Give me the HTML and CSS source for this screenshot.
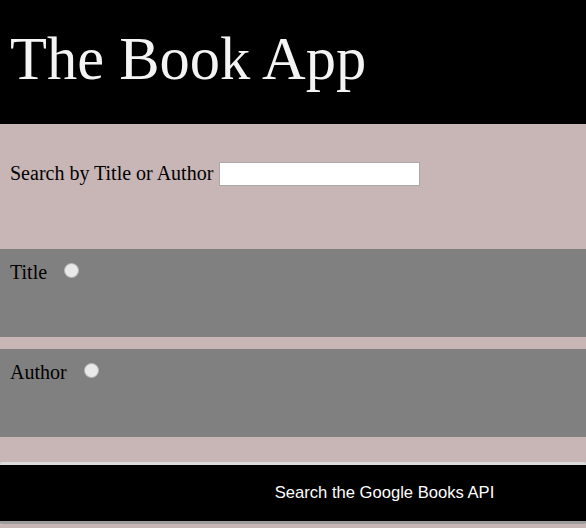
FILE: index.html
```html
<!DOCTYPE html>
<html lang="en">
<head>
<meta charset="utf-8">
<title>The Book App</title>
<link rel="stylesheet" href="styles.css">
</head>
<body>
<header class="site-header">
  <h1 class="site-title">The Book App</h1>
</header>
<form class="search-form">
  <div class="search-row">
    <label class="search-label" for="q">Search by Title or Author</label>
    <input class="search-input" id="q" type="text">
  </div>
  <div class="option">
    <label class="option-label" for="opt-title">Title</label>
    <input class="option-radio" id="opt-title" type="radio" name="type" value="title">
  </div>
  <div class="option">
    <label class="option-label" for="opt-author">Author</label>
    <input class="option-radio" id="opt-author" type="radio" name="type" value="author">
  </div>
  <button class="search-button" type="submit">Search the Google Books API</button>
</form>
</body>
</html>
```

FILE: styles.css
```css
html, body {
  margin: 0;
  padding: 0;
}

body {
  background: #c8b6b6;
  font-family: "Liberation Serif", "Times New Roman", serif;
  color: #000;
}

.site-header {
  background: #000;
  height: 124px;
  box-sizing: border-box;
  padding: 29px 10px 0;
}

.site-title {
  margin: 0;
  font-weight: normal;
  font-size: 60.5px;
  line-height: 60px;
  color: #f4f4f4;
}

.search-form {
  display: flex;
  flex-direction: column;
}

.search-row {
  height: 125px;
  box-sizing: border-box;
  padding: 38px 10px 0;
  display: flex;
  align-items: flex-start;
  gap: 6px;
}

.search-label {
  font-size: 20px;
  line-height: 22px;
}

.search-input {
  width: 201px;
  height: 24px;
  box-sizing: border-box;
  margin: 0;
  border: 1px solid #a9a9a9;
  background: #fff;
  padding: 2px 4px;
}

.option {
  background: #808080;
  height: 88px;
  box-sizing: border-box;
  padding: 12px 10px 0;
  margin-bottom: 12px;
  display: flex;
  align-items: flex-start;
}

.option-label {
  font-size: 20px;
  line-height: 22px;
}

.option-radio {
  appearance: none;
  -webkit-appearance: none;
  margin: 2px 0 0 17px;
  width: 15px;
  height: 15px;
  box-sizing: border-box;
  border-radius: 50%;
  border: 1px solid #b5b5b5;
  background: #e9e9e9;
}

.search-button {
  margin-top: 13px;
  width: 100%;
  height: 62px;
  box-sizing: border-box;
  background: #000;
  color: #fff;
  border: 0;
  border-top: 3px solid #dcdcdc;
  border-bottom: 3px solid #9c9c9c;
  border-radius: 2px;
  font-family: "Liberation Sans", Arial, sans-serif;
  font-size: 16.6px;
  padding: 0 0 0 183px;
  text-align: center;
}
```
